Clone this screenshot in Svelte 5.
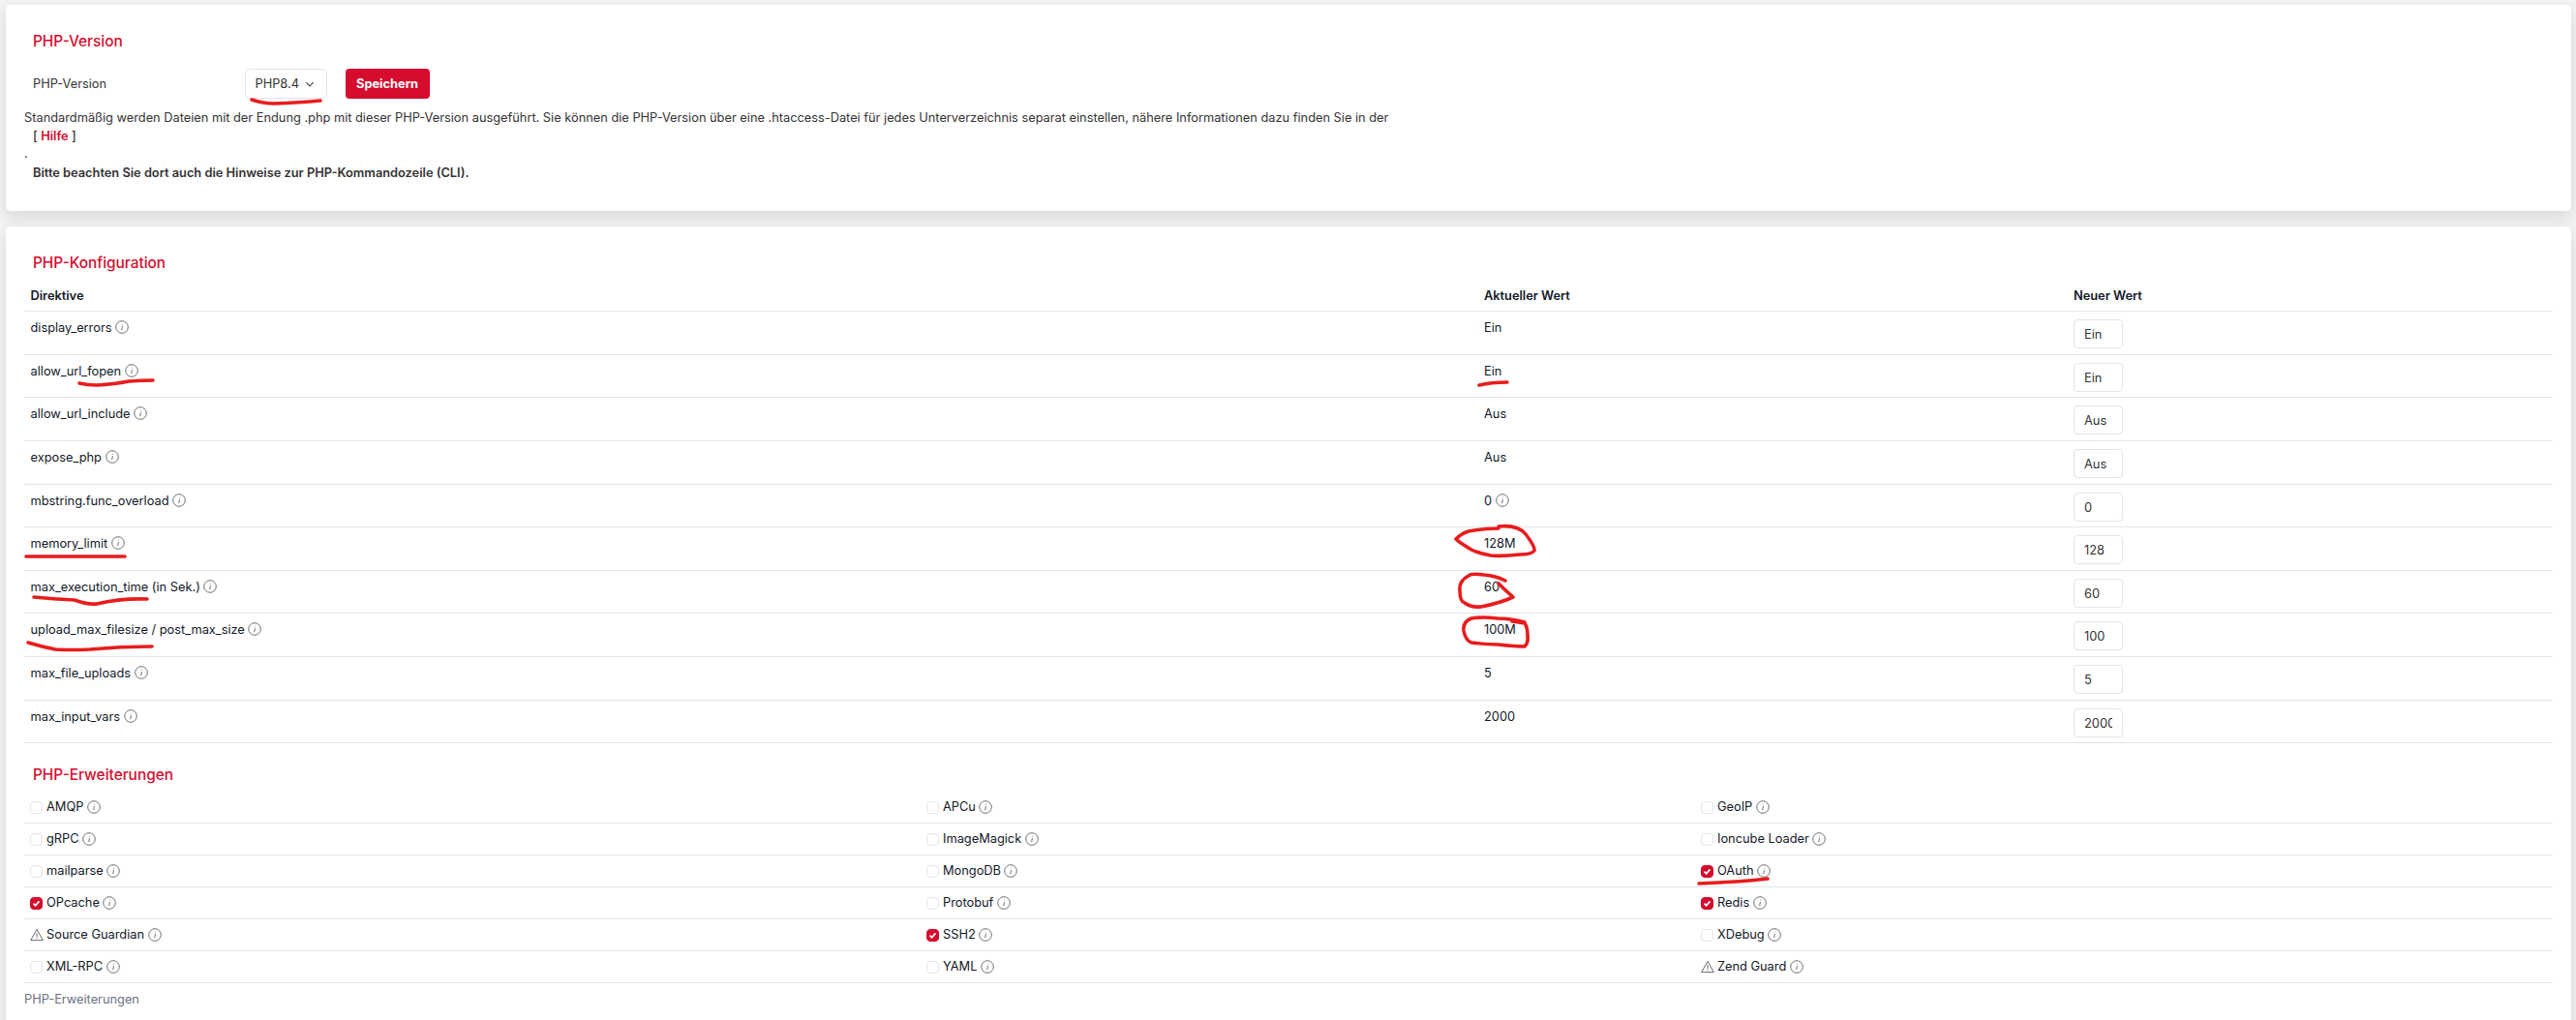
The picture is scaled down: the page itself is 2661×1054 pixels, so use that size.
<script>
  const rows = [
    { d: 'display_errors', cur: 'Ein', val: 'Ein', h: 45 },
    { d: 'allow_url_fopen', cur: 'Ein', val: 'Ein', h: 44 },
    { d: 'allow_url_include', cur: 'Aus', val: 'Aus', h: 45 },
    { d: 'expose_php', cur: 'Aus', val: 'Aus', h: 45 },
    { d: 'mbstring.func_overload', cur: '0', val: '0', h: 44, curInfo: true },
    { d: 'memory_limit', cur: '128M', val: '128', h: 45 },
    { d: 'max_execution_time (in Sek.)', cur: '60', val: '60', h: 44 },
    { d: 'upload_max_filesize / post_max_size', cur: '100M', val: '100', h: 45 },
    { d: 'max_file_uploads', cur: '5', val: '5', h: 45 },
    { d: 'max_input_vars', cur: '2000', val: '2000', h: 44 }
  ];
  const exts = [
    ['AMQP', 'off'], ['APCu', 'off'], ['GeoIP', 'off'],
    ['gRPC', 'off'], ['ImageMagick', 'off'], ['Ioncube Loader', 'off'],
    ['mailparse', 'off'], ['MongoDB', 'off'], ['OAuth', 'on'],
    ['OPcache', 'on'], ['Protobuf', 'off'], ['Redis', 'on'],
    ['Source Guardian', 'warn'], ['SSH2', 'on'], ['XDebug', 'off'],
    ['XML-RPC', 'off'], ['YAML', 'off'], ['Zend Guard', 'warn']
  ];
  const marks = [
    'M260 103 Q272 107 283 107 Q310 106 331 104',
    'M82 396 Q90 398 100 398 Q118 397 133 394 Q146 393 158 393',
    'M1528 398 Q1540 395 1557 395',
    'M27 575 Q45 575 60 575 L129 575',
    'M35 617 Q55 619 77 620 Q90 625 100 624 Q125 618 152 619',
    'M29 664 Q42 668 57 671 Q75 672 93 671 Q125 668 157 668',
    'M1548 544 Q1568 542 1576 552 Q1586 565 1585 569 Q1582 573 1570 573 Q1552 575 1540 574 Q1528 572 1520 568 Q1508 561 1504 557 Q1510 551 1517 549 Q1532 546 1548 546',
    'M1555 600 Q1545 595 1533 594 Q1520 592 1517 595 Q1507 600 1508 610 Q1508 622 1513 623 Q1520 628 1530 627 Q1550 623 1563 617 Q1555 610 1548 603',
    'M1575 643 Q1560 639 1547 639 Q1530 637 1520 639 Q1511 642 1512 652 Q1514 662 1520 664 Q1535 666 1547 666 Q1565 668 1575 668 Q1579 664 1578 657 Q1578 648 1575 644 L1562 642',
    'M1755 913 Q1775 912 1793 911 Q1810 910 1826 908'
  ];
</script>

{#snippet info()}
  <svg class="info" viewBox="0 0 16 16" aria-hidden="true">
    <circle cx="8" cy="8" r="7.2" />
    <path d="M8.5 6.9 L7.6 11.6 M8.7 4.4 L8.6 5.2" />
  </svg>
{/snippet}

{#snippet warn()}
  <svg class="warn" viewBox="0 0 16 16" aria-hidden="true">
    <path d="M8 1.6 L15.2 14.4 H.8 Z M8 6 V10.6 M8 11.8 V12.8" />
  </svg>
{/snippet}

<main class="page">
  <section class="card first">
    <h3 class="head-version">PHP-Version</h3>
    <div class="version-row">
      <span class="version-label">PHP-Version</span>
      <span class="select">PHP8.4
        <svg viewBox="0 0 12 12" aria-hidden="true"><path d="M1.5 3.8 L6 8.3 L10.5 3.8" /></svg>
      </span>
      <button class="save">Speichern</button>
    </div>
    <p class="note">Standardmäßig werden Dateien mit der Endung .php mit dieser PHP-Version ausgeführt. Sie können die PHP-Version über eine .htaccess-Datei für jedes Unterverzeichnis separat einstellen, nähere Informationen dazu finden Sie in der</p>
    <p class="help">[ <a href="#hilfe">Hilfe</a> ]</p>
    <p class="dot">.</p>
    <p class="cli">Bitte beachten Sie dort auch die Hinweise zur PHP-Kommandozeile (CLI).</p>
  </section>

  <section class="card second">
    <h3 class="head-config">PHP-Konfiguration</h3>
    <div class="table">
      <div class="tr th">
        <div>Direktive</div><div>Aktueller Wert</div><div>Neuer Wert</div>
      </div>
      {#each rows as r}
        <div class="tr" style:height="{r.h}px">
          <div>{r.d} {@render info()}</div>
          <div>{r.cur}{#if r.curInfo}&nbsp;{@render info()}{/if}</div>
          <div><input class="input" value={r.val} readonly /></div>
        </div>
      {/each}
    </div>

    <h3 class="head-ext">PHP-Erweiterungen</h3>
    <div class="exts">
      {#each exts as [name, state]}
        <div class="ext">
          {#if state === 'warn'}
            {@render warn()}
          {:else}
            <span class="check" class:on={state === 'on'}>
              {#if state === 'on'}
                <svg viewBox="0 0 14 14" aria-hidden="true"><path d="M3.8 7.2 L6 9.4 L10.2 4.8" /></svg>
              {/if}
            </span>
          {/if}
          <span class="name">{name}</span>
          {@render info()}
        </div>
      {/each}
    </div>
    <p class="foot">PHP-Erweiterungen</p>
  </section>

  <svg class="marks" viewBox="0 0 2661 1054" aria-hidden="true">
    {#each marks as d}
      <path {d} />
    {/each}
  </svg>
</main>

<style>
  :global(body) {
    margin: 0;
    background: #f3f3f3;
    font-family: Inter, "Liberation Sans", sans-serif;
    color: #111827;
    overflow: hidden;
  }
  .page {
    position: relative;
    width: 2661px;
    height: 1054px;
    overflow: hidden;
    padding: 5px 5px 0 6px;
    box-sizing: border-box;
  }
  .card {
    background: #fff;
    border-radius: 5px;
    box-shadow: 0 6px 16px rgba(0, 0, 0, 0.12);
    font-size: 12.8px;
    line-height: 20px;
  }
  .first {
    height: 213px;
    margin-bottom: 16px;
    padding: 28px 19px 0;
    box-sizing: border-box;
    color: #333;
  }
  .second {
    height: 900px;
    padding: 0 19px;
  }
  h3 {
    margin: 0;
    font-size: 15.4px;
    line-height: 20px;
    font-weight: 500;
    color: #d50c2d;
    padding-left: 9px;
  }
  .version-row {
    display: flex;
    align-items: center;
    height: 31px;
    margin-top: 18px;
    padding-left: 9px;
  }
  .version-label {
    width: 218.5px;
    color: #333;
  }
  .select {
    display: inline-flex;
    align-items: center;
    justify-content: space-between;
    width: 85px;
    height: 31px;
    box-sizing: border-box;
    padding: 0 12px 0 10px;
    border: 1px solid #e2e4ea;
    border-radius: 5px;
  }
  .select svg {
    width: 10px;
    height: 10px;
    fill: none;
    stroke: #444;
    stroke-width: 1.3;
  }
  .save {
    margin-left: 19px;
    width: 87px;
    height: 31px;
    border: 0;
    border-radius: 4px;
    background: #d50c2d;
    color: #fff;
    font: 700 12.8px Inter, sans-serif;
    padding: 0;
  }
  p { margin: 0; }
  .note { margin-top: 10px; }
  .help { margin-top: -1px; padding-left: 9px; font-weight: 500; }
  .help a { color: #d50c2d; text-decoration: none; font-weight: 600; }
  .dot { margin-top: -2px; }
  .cli { margin-top: 0; padding-left: 9px; font-weight: 600; }
  .head-config { padding-top: 28px; }
  .table { margin-top: 7px; }
  .tr {
    display: grid;
    grid-template-columns: 1501.5px 609px 1fr;
    height: 45px;
    box-sizing: border-box;
    border-bottom: 1px solid #e2e4ea;
    padding: 7px 0 0 6.5px;
    color: #111827;
  }
  .tr > div { white-space: nowrap; }
  .th {
    height: 33px;
    font-weight: 600;
  }
  .input {
    display: block;
    width: 51px;
    height: 30px;
    margin: 1px 0 0;
    padding: 0 10px;
    box-sizing: border-box;
    border: 1px solid #e2e4ea;
    border-radius: 4px;
    color: #333;
    background: #fff;
    font: inherit;
    outline: none;
  }
  .info {
    display: inline-block;
    width: 14px;
    height: 14px;
    vertical-align: -2px;
    fill: none;
    stroke: #666b74;
    stroke-width: 1.1;
  }
  .head-ext { margin-top: 23px; }
  .exts {
    display: grid;
    grid-template-columns: 926px 800px 1fr;
    margin-top: 7px;
  }
  .ext {
    display: flex;
    align-items: center;
    gap: 3.5px;
    height: 33px;
    box-sizing: border-box;
    border-bottom: 1px solid #e2e4ea;
    padding-left: 6px;
  }
  .check {
    width: 13px;
    height: 13px;
    box-sizing: border-box;
    border: 1px solid #e2e4ea;
    border-radius: 4px;
    flex: none;
    margin-right: .5px;
  }
  .check.on {
    background: #d50c2d;
    border-color: #d50c2d;
    position: relative;
  }
  .check svg {
    position: absolute;
    inset: -1px;
    width: 13px;
    height: 13px;
    fill: none;
    stroke: #fff;
    stroke-width: 1.9;
  }
  .warn {
    width: 14px;
    height: 14px;
    flex: none;
    fill: none;
    stroke: #555;
    stroke-width: 1;
    margin-right: -.5px;
  }
  .foot {
    color: #6b7280;
    margin-top: 7px;
  }
  .marks {
    position: absolute;
    inset: 0;
    width: 2661px;
    height: 1054px;
    pointer-events: none;
    fill: none;
    stroke: #e81c1c;
    stroke-width: 3.6;
    stroke-linecap: round;
    stroke-linejoin: round;
  }
</style>
